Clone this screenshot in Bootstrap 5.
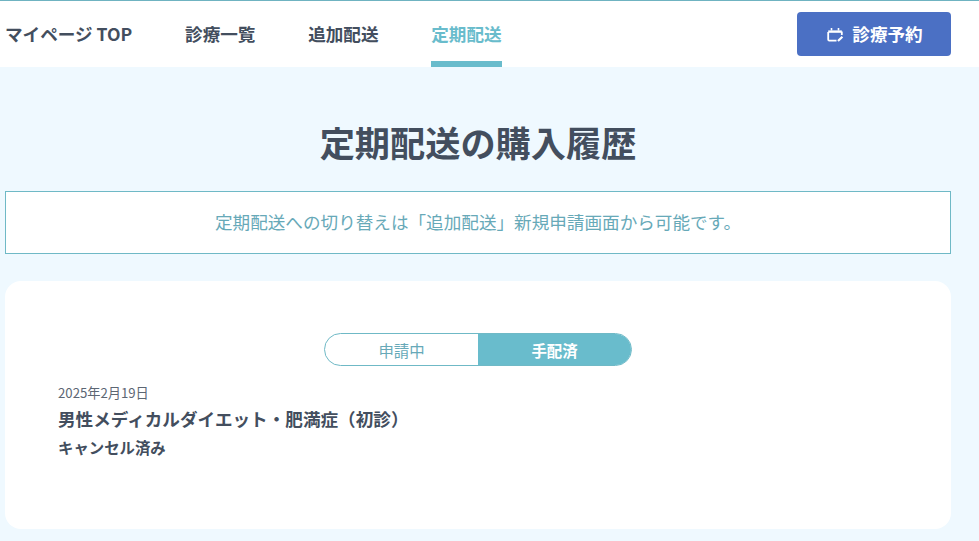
<!DOCTYPE html>
<html lang="ja">
<head>
<meta charset="utf-8">
<title>定期配送の購入履歴</title>
<link href="https://cdn.jsdelivr.net/npm/bootstrap@5.3.0/dist/css/bootstrap.min.css" rel="stylesheet">
<style>
html,body{height:541px;overflow:hidden}
body{background:#eff9ff;color:#434e5e;font-family:"Noto Sans CJK JP","Noto Sans",sans-serif}
.topbar{height:67px;background:#fff;border-top:1px solid #6fb3c1;padding:0 28px 0 5px}
.tabs{gap:52.7px;margin:0;padding:0;list-style:none}
.tabs a{display:block;height:66px;line-height:66px;font-size:17.6px;font-weight:700;color:#434e5e;text-decoration:none}
.tabs a.on{color:#69bccc;border-bottom:6px solid #69bccc}
.bookbtn{width:154px;height:44px;background:#4b70c4;border:0;border-radius:4px;color:#fff;font-size:17.6px;font-weight:700;gap:8px;margin-top:-1px;padding:0 0 0 2px}
.bookbtn:hover{background:#4b70c4;color:#fff}
.bookbtn svg{margin-top:3px}
.bookbtn span{padding-top:1px}
.pagewrap{padding:0 28px 0 5px}
.ttl{font-size:35.2px;font-weight:700;line-height:46px;text-align:center;margin:52px 0 26px}
.notice{height:63px;border:1px solid #6fb9c6;background:#fff;color:#67a9b8;font-size:17.6px;line-height:60px;text-align:center}
.panel{height:248px;margin-top:27px;background:#fff;border-radius:16px;padding:52px 53px 0}
.seg{width:308px;height:33px;margin:0 auto;border:1px solid #6fb9c6;border-radius:17px;overflow:hidden}
.seg a{flex:1;text-align:center;line-height:33px;font-size:15.4px;text-decoration:none;color:#67a9b8}
.seg a.on{background:#69bccc;color:#fff;font-weight:700}
.hdate{font-size:13.2px;line-height:18px;color:#5c6673;margin-top:18px}
.hname{font-size:17.6px;font-weight:700;line-height:24px;margin-top:5px}
.hstat{font-size:15.4px;font-weight:700;line-height:20px;margin-top:6px}
</style>
</head>
<body>
<nav class="topbar d-flex justify-content-between align-items-center">
<ul class="tabs d-flex">
<li><a href="#">マイページ TOP</a></li>
<li><a href="#">診療一覧</a></li>
<li><a href="#">追加配送</a></li>
<li><a href="#" class="on">定期配送</a></li>
</ul>
<button type="button" class="btn bookbtn d-flex align-items-center justify-content-center">
<svg width="17" height="14" viewBox="0 0 17 14" fill="none" stroke="#fff" aria-hidden="true"><path stroke-width="1.8" d="M9.5 12.6H2.3a1.1 1.1 0 0 1-1.1-1.1V4M14.8 7V3.5"/><path stroke-width="2.4" d="M1.2 3.6h13.6"/><path stroke-width="1.6" d="M4.5 0v2.4M11.5 0v2.4"/><path stroke-width="2.2" d="M11 13l4.4-4.2"/></svg>
<span>診療予約</span>
</button>
</nav>
<main class="pagewrap">
<h1 class="ttl">定期配送の購入履歴</h1>
<p class="notice mb-0">定期配送への切り替えは「追加配送」新規申請画面から可能です。</p>
<section class="panel">
<div class="seg d-flex">
<a href="#">申請中</a>
<a href="#" class="on">手配済</a>
</div>
<div class="hdate">2025年2月19日</div>
<div class="hname">男性メディカルダイエット・肥満症（初診）</div>
<div class="hstat">キャンセル済み</div>
</section>
</main>
<script src="https://cdn.jsdelivr.net/npm/bootstrap@5.3.0/dist/js/bootstrap.bundle.min.js"></script>
</body>
</html>
